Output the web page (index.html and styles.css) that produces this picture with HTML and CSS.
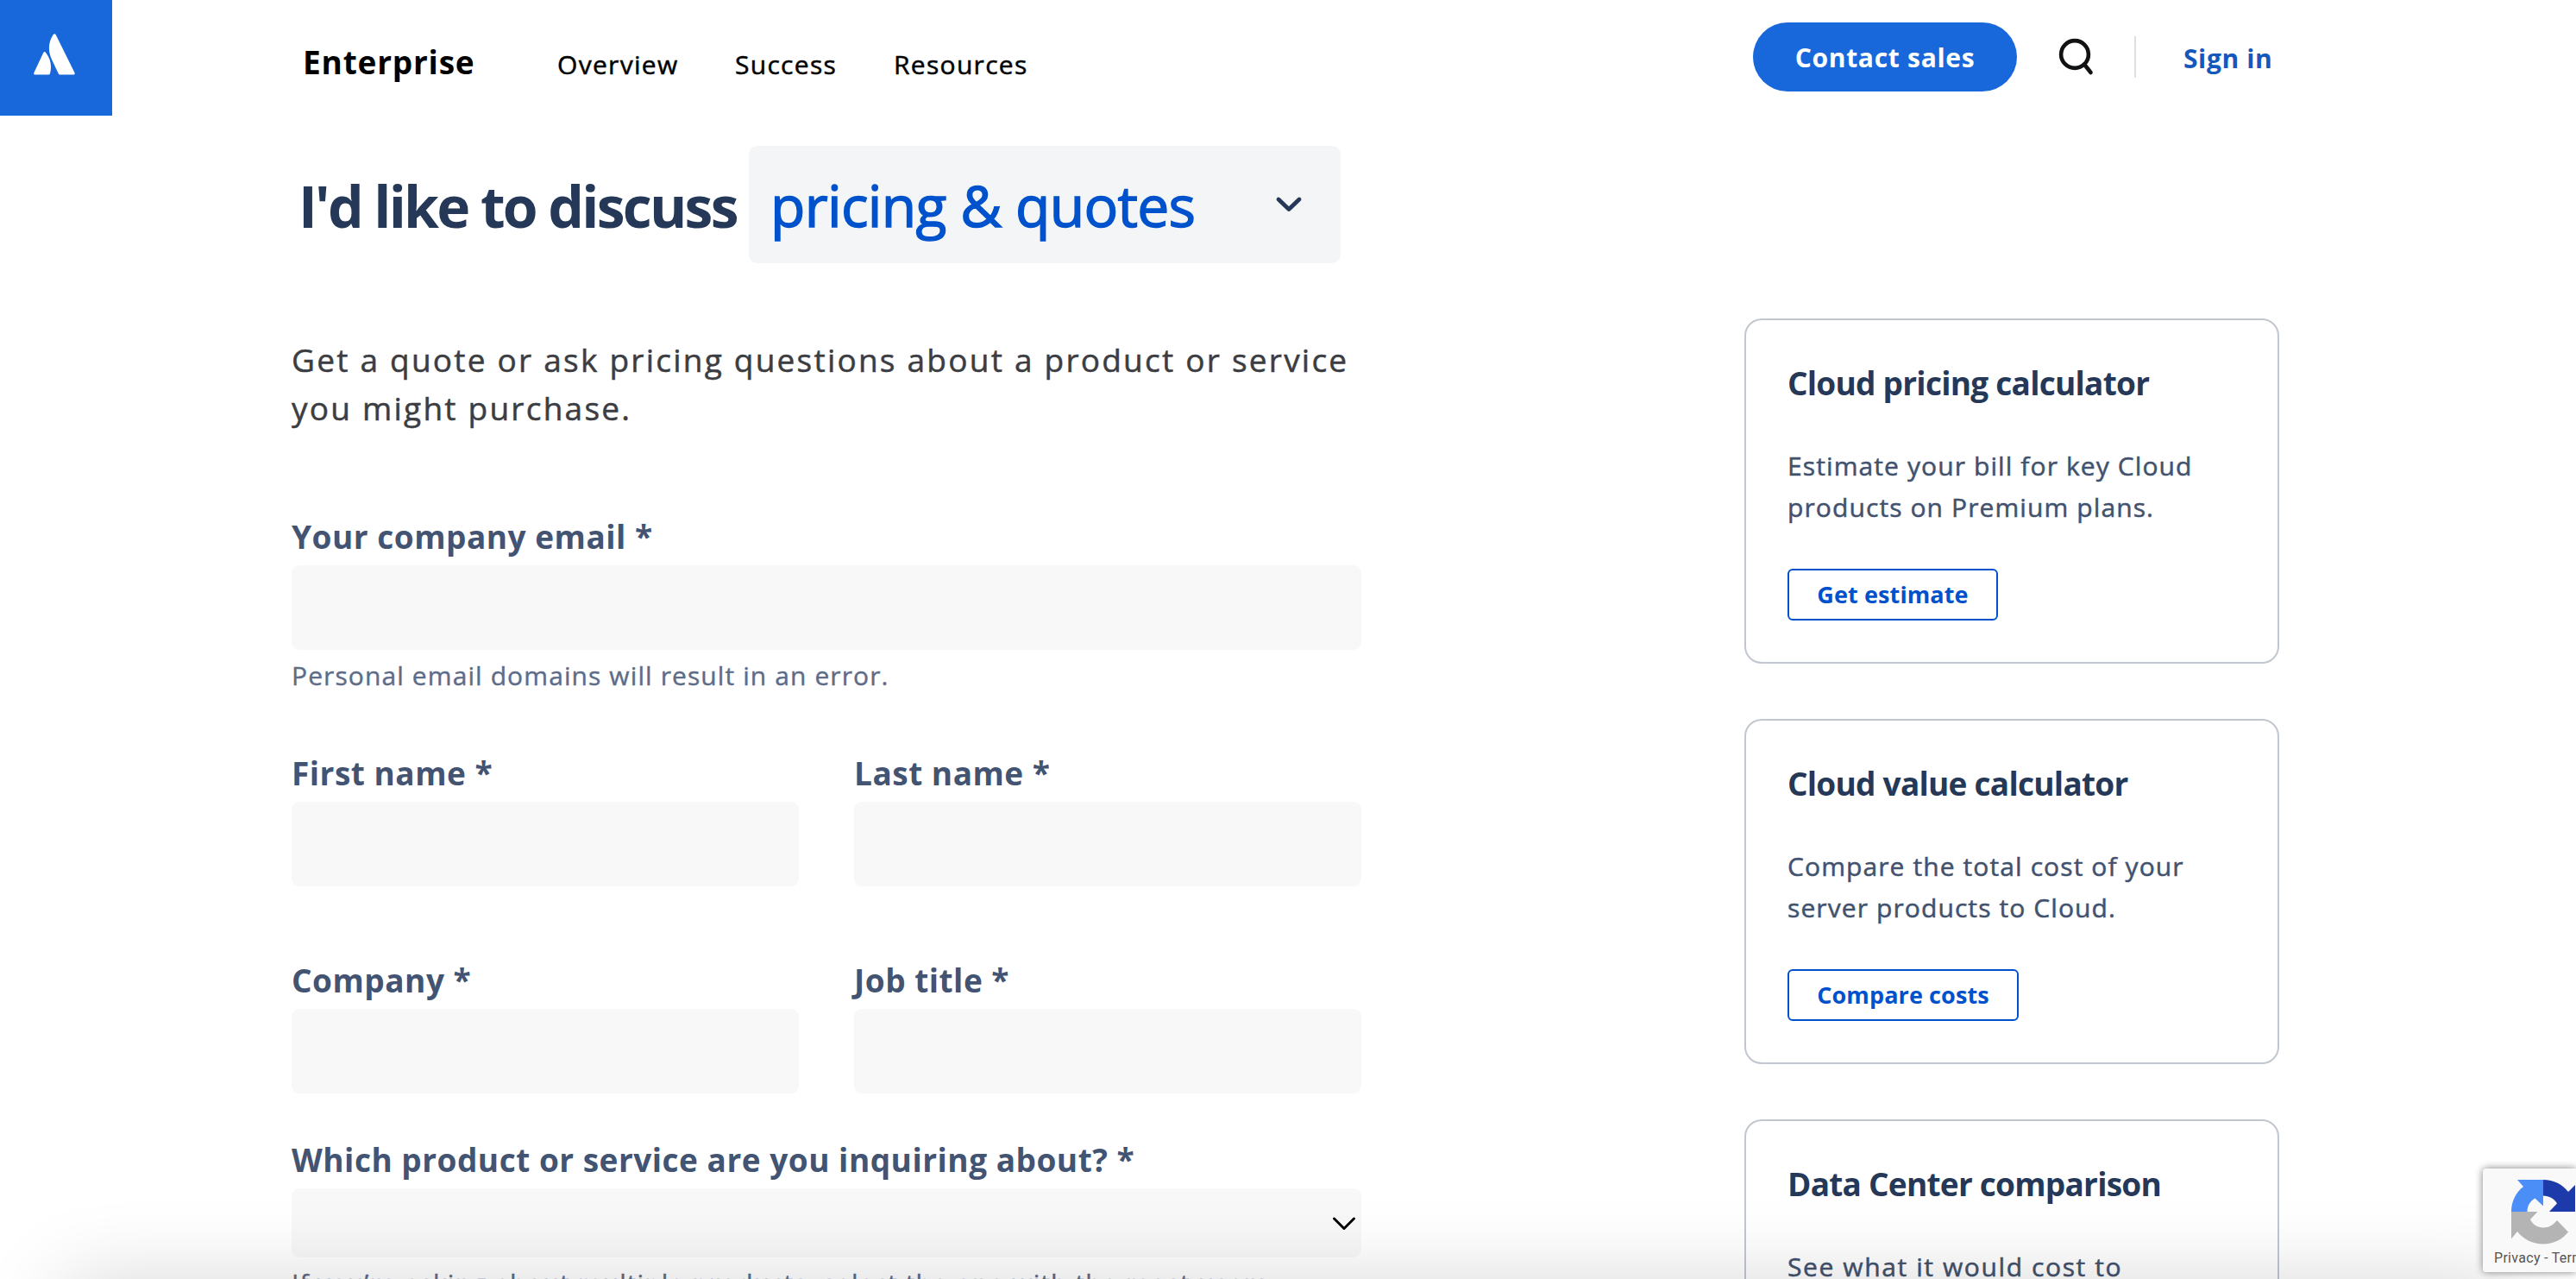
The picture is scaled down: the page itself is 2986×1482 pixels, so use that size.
FILE: index.html
```html
<!DOCTYPE html>
<html lang="en">
<head>
    <meta charset="UTF-8">
    <meta name="viewport" content="width=device-width, initial-scale=1.0">
    <title>Contact sales</title>
    <link rel="stylesheet" href="styles.css">
</head>
<body>
    <header class="header">
        <a class="logo" href="#">
            <svg width="48" height="48" viewBox="0 0 48 48" fill="#fff">
                <path d="M14.2 22.2c-.9-1.5-2.300-1.500-3 .1L.4 45.300c-.6 1.300.1 2.300 1.400 2.300H17c1 0 1.700-.4 2-1.300 2.100-7.500 1.300-16.800-4.800-24.100z"/>
                <path d="M22.600 1.300c-6.300 9.700-5.700 20.300-1.600 28.600l7.600 16.200c.5 1 1.200 1.500 2.200 1.500h15.300c1.300 0 1.900-1 1.400-2.300L25.700 1.300c-.7-1.500-2.200-1.600-3.100 0z"/>
            </svg>
        </a>
        <a class="brand" href="#">Enterprise</a>
        <nav class="nav">
            <a class="nav-overview" href="#">Overview</a>
            <a class="nav-success" href="#">Success</a>
            <a class="nav-resources" href="#">Resources</a>
        </nav>
        <div class="actions">
            <a class="contact" href="#">Contact sales</a>
            <svg class="search" width="44" height="44" viewBox="0 0 44 44" fill="none" stroke="#101214" stroke-width="4.600" stroke-linecap="round">
                <circle cx="20" cy="19" r="15.900"/>
                <path d="M31 30.500l7.500 9.500"/>
            </svg>
            <span class="divider"></span>
            <a class="signin" href="#">Sign in</a>
        </div>
    </header>

    <div class="topic">
        <h1>I'd like to discuss</h1>
        <div class="topic-select">
            <span>pricing &amp; quotes</span>
            <svg width="32" height="20" viewBox="0 0 32 20" fill="none" stroke="#253858" stroke-width="4.800" stroke-linecap="round" stroke-linejoin="round">
                <path d="M4 4l12 11.500L28 4"/>
            </svg>
        </div>
    </div>

    <main class="main">
        <form class="form">
            <p class="intro">Get a quote or ask pricing questions about a product or service<br>you might purchase.</p>

            <div class="field">
                <label for="email">Your company email *</label>
                <input type="text" id="email">
                <p class="hint">Personal email domains will result in an error.</p>
            </div>

            <div class="row row-name">
                <div class="field">
                    <label for="first">First name *</label>
                    <input type="text" id="first">
                </div>
                <div class="field">
                    <label for="last">Last name *</label>
                    <input type="text" id="last">
                </div>
            </div>

            <div class="row row-company">
                <div class="field">
                    <label for="company">Company *</label>
                    <input type="text" id="company">
                </div>
                <div class="field">
                    <label for="job">Job title *</label>
                    <input type="text" id="job">
                </div>
            </div>

            <div class="field field-product">
                <label>Which product or service are you inquiring about? *</label>
                <div class="select">
                    <svg width="28" height="18" viewBox="0 0 28 18" fill="none" stroke="#000" stroke-width="3" stroke-linecap="round" stroke-linejoin="round">
                        <path d="M2.500 3L14 14.500 25.500 3"/>
                    </svg>
                </div>
                <p class="hint">If you’re asking about multiple products, select the one with the most users.</p>
            </div>
        </form>

        <aside class="cards">
            <div class="card">
                <h3>Cloud pricing calculator</h3>
                <p>Estimate your bill for key Cloud<br>products on Premium plans.</p>
                <a class="card-btn btn-estimate" href="#">Get estimate</a>
            </div>
            <div class="card">
                <h3>Cloud value calculator</h3>
                <p>Compare the total cost of your<br>server products to Cloud.</p>
                <a class="card-btn btn-costs" href="#">Compare costs</a>
            </div>
            <div class="card">
                <h3>Data Center comparison</h3>
                <p class="wide">See what it would cost to</p>
            </div>
        </aside>
    </main>

    <div class="bottom-shadow"></div>

    <div class="recaptcha">
        <svg width="74" height="76" viewBox="0 0 74 76">
            <path fill="#1c3aa9" d="M37 0c12 0 22.500 5.500 29 14l8-8v31H44l9-9.500c-3-5.500-9-9-16-9z"/>
            <path fill="#4c8ef7" d="M37 0v30.500L27.500 21.500C22 24.500 18.500 30 18.500 37H0c0-12 5.500-22.500 14-29L7 0z"/>
            <path fill="#b4b4b4" d="M0 37h30.500L22 46c3 6 8.500 9.500 15 9.500 6.500 0 12-3.500 16-8.500l13 13.500C59.500 69 49 74.500 37 74.500c-12 0-23-5.500-30-14.500l-7 8.500z"/>
        </svg>
        <span>Privacy - Terms</span>
    </div>
</body>
</html>
```
FILE: styles.css
```css
* {
    box-sizing: border-box;
}
body {
    margin: 0;
    width: 2986px;
    height: 1482px;
    overflow: hidden;
    position: relative;
    background-color: #fff;
    font-family: "Open Sans", "Noto Sans", sans-serif;
    white-space: nowrap;
}
h1, h3, p {
    margin: 0;
}
a {
    text-decoration: none;
}

/* header */
.header {
    display: flex;
    align-items: center;
    height: 134px;
}
.logo {
    width: 130px;
    height: 134px;
    padding: 39px 0 0 39px;
    background-color: #1868db;
}
.brand {
    width: 295px;
    margin-left: 221px;
    padding-top: 8px;
    font-size: 37px;
    font-weight: 700;
    letter-spacing: 0.8px;
    color: #000;
}
.nav {
    display: flex;
    padding-top: 15px;
    font-size: 30px;
    font-weight: 500;
    letter-spacing: 1.3px;
    -webkit-text-stroke: 0.5px;
}
.nav a {
    color: #000;
}
.nav-overview {
    width: 206px;
}
.nav-success {
    width: 184px;
}
.actions {
    display: flex;
    align-items: center;
    width: 954px;
    height: 132px;
    margin: 0 0 2px auto;
}
.contact {
    width: 306px;
    height: 80px;
    border-radius: 40px;
    background-color: #1868db;
    color: #fff;
    font-size: 30px;
    font-weight: 700;
    letter-spacing: 0.7px;
    line-height: 82px;
    text-align: center;
}
.search {
    margin-left: 47px;
}
.divider {
    width: 2px;
    height: 48px;
    margin: 0 55px 0 45px;
    background-color: #dcdfe4;
}
.signin {
    padding-top: 2px;
    color: #1558bc;
    font-size: 30px;
    font-weight: 700;
    letter-spacing: 0.6px;
}

/* heading */
.topic {
    display: flex;
    height: 136px;
    margin: 35px 0 0 346px;
    font-size: 66px;
    line-height: 139px;
}
.topic h1 {
    width: 522px;
    font-size: 66px;
    font-weight: 700;
    letter-spacing: -2.75px;
    color: #253858;
}
.topic-select {
    display: flex;
    align-items: center;
    justify-content: space-between;
    width: 686px;
    padding: 0 44px 0 25px;
    border-radius: 10px;
    background-color: #f4f5f7;
    color: #0052cc;
    font-weight: 500;
    letter-spacing: -0.7px;
    -webkit-text-stroke: 1.4px;
}

/* form */
.main {
    display: flex;
    justify-content: space-between;
    padding: 64px 344px 0 338px;
}
.form {
    width: 1240px;
    padding-top: 20px;
}
.intro {
    margin-bottom: 96px;
    font-size: 37px;
    letter-spacing: 2.23px;
    line-height: 56px;
    color: #3b3d42;
    -webkit-text-stroke: 0.5px;
}
.field {
    flex: 1;
}
.field label {
    display: block;
    margin-bottom: 9px;
    font-size: 37px;
    font-weight: 700;
    letter-spacing: 0.5px;
    line-height: 49px;
    color: #435372;
}
.field input {
    display: block;
    width: 100%;
    height: 98px;
    border: none;
    border-radius: 9px;
    background-color: #f8f8f8;
}
.hint {
    margin-top: 6px;
    font-size: 30px;
    letter-spacing: 1.1px;
    line-height: 48px;
    color: #5e6c88;
    -webkit-text-stroke: 0.4px;
}
.row {
    display: flex;
    gap: 64px;
}
.row-name {
    margin-top: 64px;
}
.row-company {
    margin-top: 84px;
}
.field-product {
    margin-top: 52px;
}
.select {
    display: flex;
    align-items: center;
    justify-content: flex-end;
    height: 80px;
    padding: 2px 6px 0 0;
    border-radius: 9px;
    background-color: #f8f8f8;
}

/* cards */
.cards {
    display: flex;
    flex-direction: column;
    gap: 64px;
    width: 620px;
}
.card {
    height: 400px;
    padding: 48px;
    border: 2px solid #c1c7d0;
    border-radius: 20px;
}
.card h3 {
    margin-bottom: 47px;
    font-size: 37px;
    font-weight: 700;
    letter-spacing: -0.75px;
    line-height: 50px;
    color: #253858;
}
.card p {
    margin-bottom: 47px;
    font-size: 30px;
    letter-spacing: 1.1px;
    line-height: 48px;
    color: #42526e;
    -webkit-text-stroke: 0.5px;
}
.card .wide {
    letter-spacing: 1.6px;
}
.card-btn {
    display: block;
    height: 60px;
    border: 2px solid #0052cc;
    border-radius: 6px;
    color: #0052cc;
    font-size: 27px;
    font-weight: 700;
    letter-spacing: 0.1px;
    line-height: 55px;
    text-align: center;
}
.btn-estimate {
    width: 244px;
}
.btn-costs {
    width: 268px;
}

/* shadow of the banner that sits below the fold */
.bottom-shadow {
    position: absolute;
    top: 1490px;
    left: 75px;
    right: 75px;
    height: 200px;
    box-shadow: 0 0 100px rgba(0, 0, 0, 0.18);
}

.recaptcha {
    position: absolute;
    top: 1354px;
    left: 2878px;
    right: 0;
    height: 120px;
    padding: 13px 0 0 33px;
    border-radius: 4px 0 0 4px;
    background-color: #f9f9f9;
    box-shadow: 0 0 10px gray;
    overflow: hidden;
}
.recaptcha svg {
    display: block;
}
.recaptcha span {
    display: block;
    margin: 5px 0 0 -20px;
    font-family: Roboto, sans-serif;
    font-size: 16px;
    letter-spacing: 0.3px;
    line-height: 20px;
    color: #555;
}
```
